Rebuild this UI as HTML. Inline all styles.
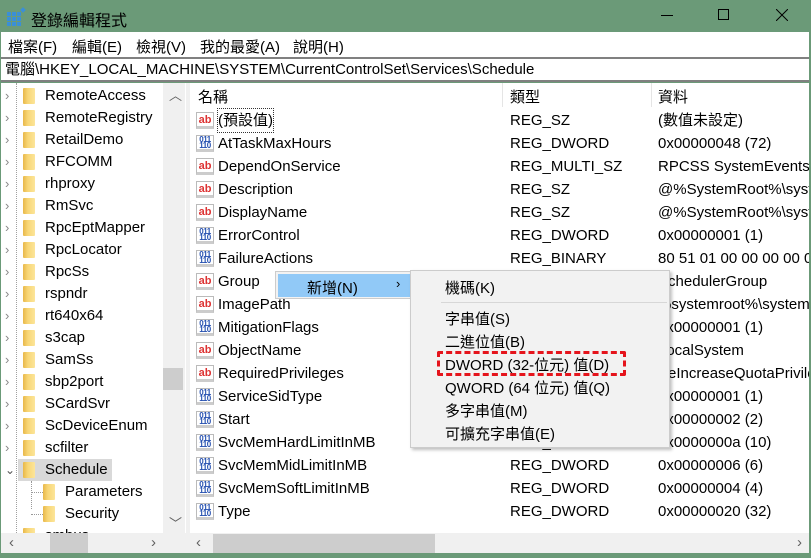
<!DOCTYPE html>
<html><head><meta charset="utf-8"><style>
*{margin:0;padding:0;box-sizing:border-box}
body{width:811px;height:558px;overflow:hidden;background:#6b9a78;font-family:"Liberation Sans","Noto Sans CJK TC",sans-serif;font-size:15px;color:#000;position:relative}
.abs{position:absolute}
#title{left:0;top:0;width:811px;height:32px;background:#6b9a78}
#menu{left:1px;top:32px;width:808px;height:25px;background:#fff}
#menu span{position:absolute;top:4px}
#addr{left:1px;top:57px;width:808px;height:25px;background:#fff;border-top:2px solid #808080;border-bottom:2px solid #808080;padding-left:4px;line-height:21px}
#tree{left:1px;top:83px;width:185px;height:470px;background:#fff;overflow:hidden}
#sep{left:186px;top:83px;width:4px;height:470px;background:#f0f0f0}
#list{left:190px;top:83px;width:619px;height:470px;background:#fff;overflow:hidden}
.t{position:absolute;left:0;height:22px;line-height:22px;white-space:nowrap}
.fold{position:absolute;width:12px;height:16px;background:linear-gradient(90deg,#e8b84a 0,#f8d676 40%,#fce59a 100%);border-radius:1px}
.r{position:absolute;left:0;height:23px;line-height:23px;white-space:nowrap;width:619px}
.ic{position:absolute;left:6px;top:3px;width:18px;height:17px;font-size:11px;font-weight:bold;text-align:center;line-height:14px}
.ab{color:#d33;background:#fff;border:1px solid #bbb;border-bottom:3px solid #ccc}
.bin{color:#2550b0;background:#fff;border:1px solid #bbb;border-bottom:3px solid #ccc;font-size:8px;line-height:6px;padding-top:1px;letter-spacing:-0.5px}
.c1{position:absolute;left:28px}.c2{position:absolute;left:320px}.c3{position:absolute;left:468px}
</style></head><body>
<div id="title" class="abs">
<svg class="abs" style="left:7px;top:7px" width="20" height="19"><g fill="#3b8fd6"><rect x="0" y="5" width="4" height="4"/><rect x="5" y="5" width="4" height="4"/><rect x="10" y="5" width="4" height="4"/><rect x="0" y="10" width="4" height="4"/><rect x="5" y="10" width="4" height="4"/><rect x="10" y="10" width="4" height="4"/><rect x="0" y="15" width="4" height="4"/><rect x="5" y="15" width="4" height="4"/><rect x="10" y="15" width="4" height="4"/><rect x="14" y="1" width="4" height="4" transform="rotate(45 16 3)"/></g></svg>
<span class="abs" style="left:31px;top:7px;font-size:16px">登錄編輯程式</span>
<span class="abs" style="left:661px;top:15px;width:12px;height:1px;background:#000"></span>
<span class="abs" style="left:718px;top:9px;width:11px;height:11px;border:1px solid #000"></span>
<svg class="abs" style="left:776px;top:9px" width="12" height="12"><path d="M0 0L12 12M12 0L0 12" stroke="#000" stroke-width="1"/></svg>
</div>
<div id="menu" class="abs"><span style="left:7px">檔案(F)</span><span style="left:71px">編輯(E)</span><span style="left:135px">檢視(V)</span><span style="left:199px">我的最愛(A)</span><span style="left:292px">說明(H)</span></div>
<div id="addr" class="abs">電腦\HKEY_LOCAL_MACHINE\SYSTEM\CurrentControlSet\Services\Schedule</div>
<div id="tree" class="abs">
<div class="abs" style="left:15px;top:0;height:450px;border-left:1px dotted #a0a0a0"></div>
<div id="tr" style="position:absolute;left:0;top:2px;width:185px;height:460px"></div>
<div class="abs" style="left:162px;top:0;width:22px;height:450px;background:#f0f0f0"></div>
<div class="abs" style="left:162px;top:285px;width:20px;height:22px;background:#cdcdcd"></div>
<div class="abs" style="left:168px;top:2px;color:#606060;font-size:13px">︿</div>
<div class="abs" style="left:168px;top:430px;color:#606060;font-size:13px">﹀</div>
<div class="abs" style="left:0;top:450px;width:185px;height:22px;background:#f0f0f0"></div>
<div class="abs" style="left:49px;top:450px;width:38px;height:20px;background:#cdcdcd"></div>
<div class="abs" style="left:8px;top:451px;color:#606060">‹</div><div class="abs" style="left:150px;top:451px;color:#606060">›</div>
</div>
<div id="sep" class="abs"></div>
<div id="list" class="abs">
<div class="abs" style="left:0;top:0;width:619px;height:24px;border-bottom:1px solid #fff"></div>
<span class="abs" style="left:8px;top:3px">名稱</span><div class="abs" style="left:312px;top:0;width:1px;height:24px;background:#e5e5e5"></div>
<span class="abs" style="left:320px;top:3px">類型</span><div class="abs" style="left:461px;top:0;width:1px;height:24px;background:#e5e5e5"></div>
<span class="abs" style="left:468px;top:3px">資料</span>
<div id="rows" style="position:absolute;left:0;top:2px;width:619px;height:450px"></div>
<div class="abs" style="left:0;top:450px;width:619px;height:22px;background:#f0f0f0"></div>
<div class="abs" style="left:23px;top:451px;width:222px;height:20px;background:#cdcdcd"></div>
<div class="abs" style="left:6px;top:451px;color:#606060">‹</div><div class="abs" style="left:607px;top:451px;color:#606060">›</div>
</div>
<div class="abs" style="left:275px;top:271px;width:136px;height:28px;background:#f2f2f2;border:1px solid #ccc;border-right:none">
<div class="abs" style="left:2px;top:2px;width:133px;height:23px;background:#91c9f7"></div>
<span class="abs" style="left:31px;top:5px">新增(N)</span><span class="abs" style="left:120px;top:4px;font-size:13px">›</span></div>
<div class="abs" style="left:410px;top:270px;width:260px;height:178px;background:#f2f2f2;border:1px solid #ccc;box-shadow:2px 2px 3px rgba(0,0,0,.25)">
<span class="abs" style="left:34px;top:6px">機碼(K)</span>
<div class="abs" style="left:30px;top:31px;width:226px;height:1px;background:#d7d7d7"></div>
<span class="abs" style="left:34px;top:37px">字串值(S)</span>
<span class="abs" style="left:34px;top:60px">二進位值(B)</span>
<span class="abs" style="left:34px;top:83px">DWORD (32-位元) 值(D)</span>
<span class="abs" style="left:34px;top:106px">QWORD (64 位元) 值(Q)</span>
<span class="abs" style="left:34px;top:129px">多字串值(M)</span>
<span class="abs" style="left:34px;top:152px">可擴充字串值(E)</span>
<div class="abs" style="left:26px;top:80px;width:189px;height:25px;border:3px dashed #e5141c;border-radius:2px"></div>
</div>
<script>
var tr=["RemoteAccess","RemoteRegistry","RetailDemo","RFCOMM","rhproxy","RmSvc","RpcEptMapper","RpcLocator","RpcSs","rspndr","rt640x64","s3cap","SamSs","sbp2port","SCardSvr","ScDeviceEnum","scfilter"];
var h="";
tr.forEach(function(n,i){var y=i*22;h+='<div class="t" style="top:'+y+'px"><span style="position:absolute;left:4px;color:#888;font-size:13px">›</span><div class="fold" style="left:22px;top:3px"></div><span style="position:absolute;left:44px">'+n+'</span></div>';});
var y=17*22;
h+='<div class="t" style="top:'+y+'px;left:17px;width:94px;background:#d9d9d9"></div><div class="t" style="top:'+y+'px"><span style="position:absolute;left:4px;color:#555;font-size:12px">⌄</span><div class="fold" style="left:22px;top:3px"></div><span style="position:absolute;left:44px">Schedule</span></div>';
h+='<div class="abs" style="left:30px;top:'+(y+22)+'px;height:28px;border-left:1px dotted #999"></div>';
["Parameters","Security"].forEach(function(n,i){var yy=y+22*(i+1);h+='<div class="abs" style="left:30px;top:'+(yy+11)+'px;width:12px;border-top:1px dotted #999"></div><div class="t" style="top:'+yy+'px"><div class="fold" style="left:42px;top:3px"></div><span style="position:absolute;left:64px">'+n+'</span></div>';});
h+='<div class="t" style="top:'+(y+66)+'px"><div class="fold" style="left:22px;top:3px"></div><span style="position:absolute;left:44px">smbus</span></div>';
document.getElementById("tr").innerHTML=h;
var rs=[["a","(預設值)","REG_SZ","(數值未設定)"],["b","AtTaskMaxHours","REG_DWORD","0x00000048 (72)"],["a","DependOnService","REG_MULTI_SZ","RPCSS SystemEventsBroker"],["a","Description","REG_SZ","@%SystemRoot%\\system32"],["a","DisplayName","REG_SZ","@%SystemRoot%\\system32"],["b","ErrorControl","REG_DWORD","0x00000001 (1)"],["b","FailureActions","REG_BINARY","80 51 01 00 00 00 00 00"],["a","Group","REG_SZ","SchedulerGroup"],["a","ImagePath","REG_EXPAND_SZ","%systemroot%\\system32"],["b","MitigationFlags","REG_DWORD","0x00000001 (1)"],["a","ObjectName","REG_SZ","LocalSystem"],["a","RequiredPrivileges","REG_MULTI_SZ","SeIncreaseQuotaPrivilege"],["b","ServiceSidType","REG_DWORD","0x00000001 (1)"],["b","Start","REG_DWORD","0x00000002 (2)"],["b","SvcMemHardLimitInMB","REG_DWORD","0x0000000a (10)"],["b","SvcMemMidLimitInMB","REG_DWORD","0x00000006 (6)"],["b","SvcMemSoftLimitInMB","REG_DWORD","0x00000004 (4)"],["b","Type","REG_DWORD","0x00000020 (32)"]];
h="";
rs.forEach(function(r,i){var yy=24+i*23;var ic=r[0]=="a"?'<div class="ic ab">ab</div>':'<div class="ic bin">011<br>110</div>';h+='<div class="r" style="top:'+yy+'px">'+ic+'<span class="c1"'+(i==0?' style="outline:1px dotted #333"':'')+'>'+r[1]+'</span><span class="c2">'+r[2]+'</span><span class="c3">'+r[3]+'</span></div>';});
document.getElementById("rows").innerHTML=h;
</script>
</body></html>
